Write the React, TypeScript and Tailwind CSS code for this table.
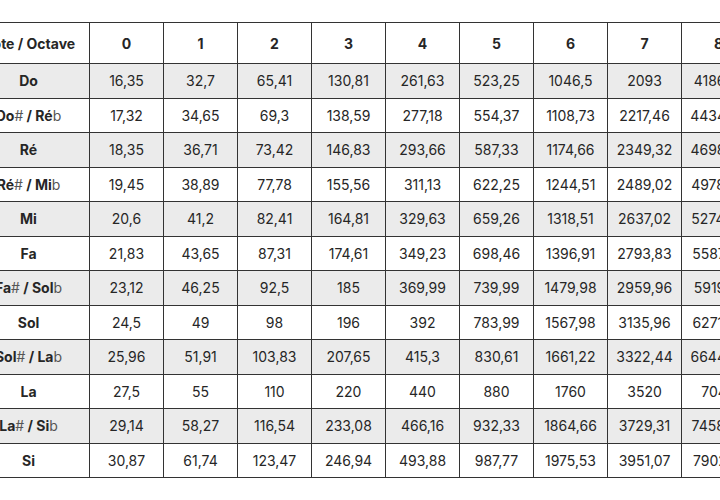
import React from "react";

const octaves = ["0", "1", "2", "3", "4", "5", "6", "7", "8"];

// note name parts: bold name, light accidentals
type Part = { t: string; light?: boolean };

const rows: { name: Part[]; freqs: string[] }[] = [
  { name: [{ t: "Do" }], freqs: ["16,35", "32,7", "65,41", "130,81", "261,63", "523,25", "1046,5", "2093", "4186,01"] },
  { name: [{ t: "Do" }, { t: "#", light: true }, { t: " / Ré" }, { t: "b", light: true }], freqs: ["17,32", "34,65", "69,3", "138,59", "277,18", "554,37", "1108,73", "2217,46", "4434,92"] },
  { name: [{ t: "Ré" }], freqs: ["18,35", "36,71", "73,42", "146,83", "293,66", "587,33", "1174,66", "2349,32", "4698,64"] },
  { name: [{ t: "Ré" }, { t: "#", light: true }, { t: " / Mi" }, { t: "b", light: true }], freqs: ["19,45", "38,89", "77,78", "155,56", "311,13", "622,25", "1244,51", "2489,02", "4978,03"] },
  { name: [{ t: "Mi" }], freqs: ["20,6", "41,2", "82,41", "164,81", "329,63", "659,26", "1318,51", "2637,02", "5274,04"] },
  { name: [{ t: "Fa" }], freqs: ["21,83", "43,65", "87,31", "174,61", "349,23", "698,46", "1396,91", "2793,83", "5587,65"] },
  { name: [{ t: "Fa" }, { t: "#", light: true }, { t: " / Sol" }, { t: "b", light: true }], freqs: ["23,12", "46,25", "92,5", "185", "369,99", "739,99", "1479,98", "2959,96", "5919,91"] },
  { name: [{ t: "Sol" }], freqs: ["24,5", "49", "98", "196", "392", "783,99", "1567,98", "3135,96", "6271,93"] },
  { name: [{ t: "Sol" }, { t: "#", light: true }, { t: " / La" }, { t: "b", light: true }], freqs: ["25,96", "51,91", "103,83", "207,65", "415,3", "830,61", "1661,22", "3322,44", "6644,88"] },
  { name: [{ t: "La" }], freqs: ["27,5", "55", "110", "220", "440", "880", "1760", "3520", "7040"] },
  { name: [{ t: "La" }, { t: "#", light: true }, { t: " / Si" }, { t: "b", light: true }], freqs: ["29,14", "58,27", "116,54", "233,08", "466,16", "932,33", "1864,66", "3729,31", "7458,62"] },
  { name: [{ t: "Si" }], freqs: ["30,87", "61,74", "123,47", "246,94", "493,88", "987,77", "1975,53", "3951,07", "7902,13"] },
];

export default function App() {
  return (
    <div className="w-[720px] h-[500px] overflow-hidden bg-white pt-[22px] text-[#262626] text-[14px] font-['Inter','Liberation_Sans',sans-serif]">
      <table className="-ml-[33px] w-[788px] min-w-[788px] table-fixed border-collapse">
        <colgroup>
          <col className="w-[122px]" />
          {octaves.map((o) => (
            <col key={o} className="w-[74px]" />
          ))}
        </colgroup>
        <thead>
          <tr className="h-[41px]">
            <th className="border border-[#333] font-bold text-center whitespace-nowrap">Note / Octave</th>
            {octaves.map((o) => (
              <th key={o} className="border border-[#333] font-bold text-center">
                {o}
              </th>
            ))}
          </tr>
        </thead>
        <tbody>
          {rows.map((r, i) => (
            <tr key={i} className={`h-[34.5px] ${i % 2 === 0 ? "bg-[#ebebeb]" : "bg-white"}`}>
              <td className="border border-[#333] text-center font-bold whitespace-nowrap">
                {r.name.map((p, j) => (
                  <span key={j} className={p.light ? "font-normal text-[#555]" : ""}>
                    {p.t}
                  </span>
                ))}
              </td>
              {r.freqs.map((f, j) => (
                <td key={j} className="border border-[#333] text-center whitespace-nowrap">
                  {f}
                </td>
              ))}
            </tr>
          ))}
        </tbody>
      </table>
    </div>
  );
}
